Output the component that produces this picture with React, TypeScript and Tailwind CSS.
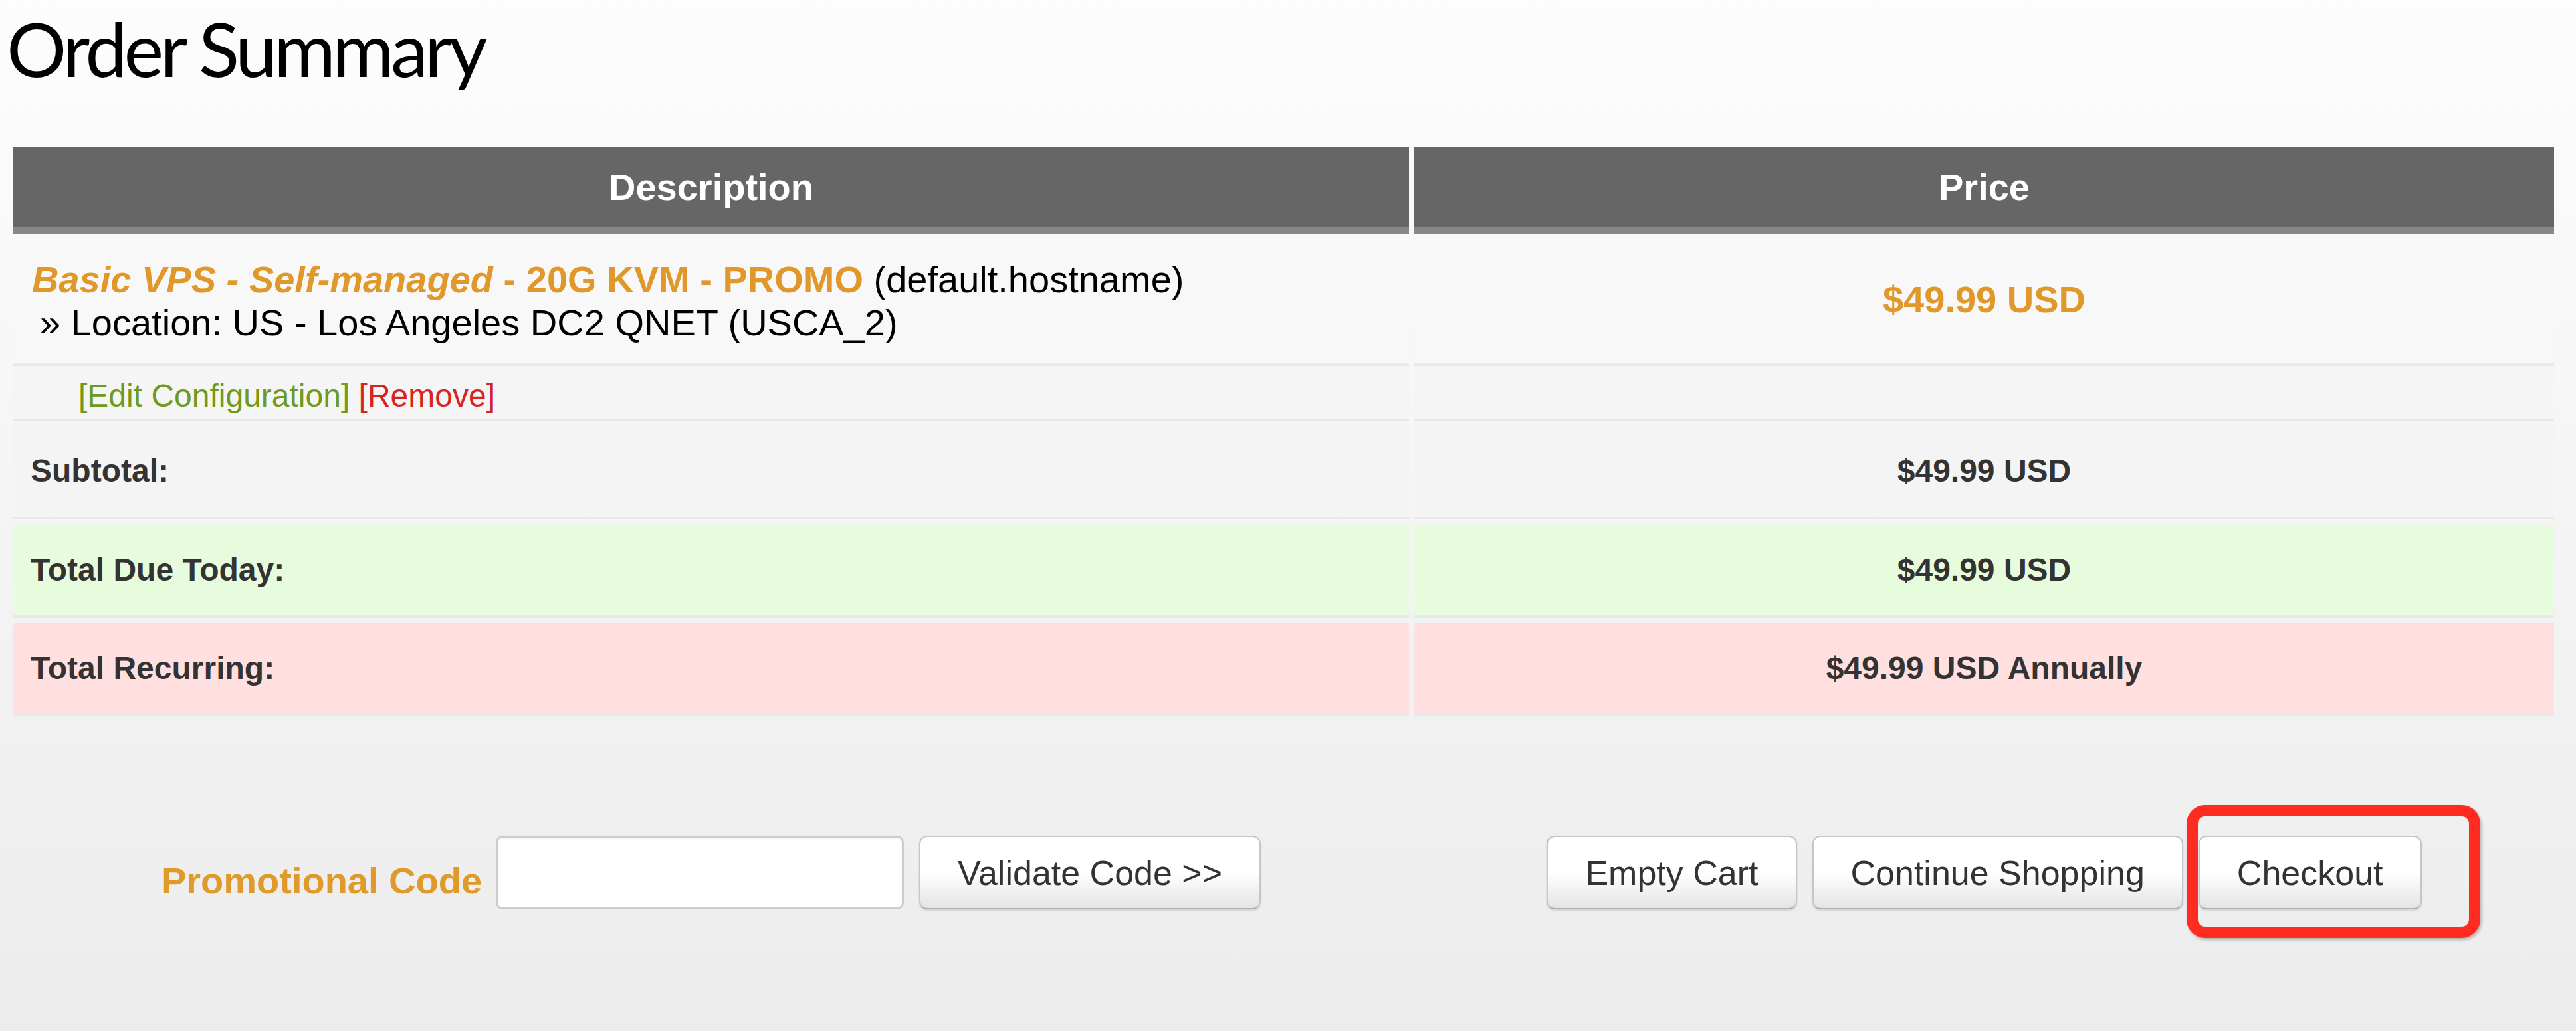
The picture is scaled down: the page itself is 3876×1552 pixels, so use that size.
import React from "react";

const BTN =
  "h-[111px] rounded-[12px] border-2 border-[#c6c6c6] border-b-[#b2b2b2] bg-linear-to-b from-white via-white to-[#e4e4e4] px-[56px] text-[52px] leading-none text-[#333333] shadow-[0_2px_3px_rgba(0,0,0,0.12)] whitespace-nowrap";

function CartButton({ label }: { label: string }) {
  return (
    <button type="button" className={BTN}>
      {label}
    </button>
  );
}

export default function App() {
  return (
    <div className="min-h-[1552px] w-full bg-linear-to-b from-[#fdfdfd] to-[#ececec] pl-[20px] pr-[33px] font-['Liberation_Sans',Arial,sans-serif]">
      <h1 className="h-[221px] -ml-[10px] pt-[16px] font-['Lato',sans-serif] text-[113px] font-normal leading-none tracking-[-5px] text-black">
        Order Summary
      </h1>

      {/* header */}
      <div className="grid grid-cols-[2100px_1fr] gap-x-[8px]">
        {["Description", "Price"].map((h) => (
          <div
            key={h}
            className="flex h-[132px] items-center justify-center border-t border-b-[11px] border-t-[#d9d9d9] border-b-[#888888] bg-[#666666] text-[56px] font-bold text-white"
          >
            {h}
          </div>
        ))}
      </div>

      {/* product */}
      <div className="mt-[2px] grid grid-cols-[2100px_1fr] gap-x-[8px]">
        <div className="h-[196px] border-b-4 border-[#e9e9e9] bg-[#f8f8f8] pl-[28px] pt-[33px] text-[56px] leading-[65px] text-black">
          <div>
            <span className="font-bold text-[#e0982a]">
              <i>Basic VPS - Self-managed</i> - 20G KVM - PROMO
            </span>{" "}
            (default.hostname)
          </div>
          <div className="pl-[12px]">» Location: US - Los Angeles DC2 QNET (USCA_2)</div>
        </div>
        <div className="flex h-[196px] items-center justify-center border-b-4 border-[#e9e9e9] bg-[#f8f8f8] text-[56px] font-bold text-[#e0982a]">
          $49.99 USD
        </div>
      </div>

      <div className="grid grid-cols-[2100px_1fr] gap-x-[8px]">
        <div className="h-[83px] border-b-4 border-[#e9e9e9] bg-[#f5f5f5] pl-[98px] pt-[21px] text-[48px] leading-none">
          <a className="text-[#6f9a20]">[Edit Configuration]</a>{" "}
          <a className="text-[#d42424]">[Remove]</a>
        </div>
        <div className="h-[83px] border-b-4 border-[#e9e9e9] bg-[#f5f5f5]" />
      </div>

      {/* totals */}
      <div className="grid grid-cols-[2100px_1fr] gap-x-[8px] text-[48px] font-bold text-[#333333]">
        <div className="flex h-[148px] items-center border-b-4 border-[#e9e9e9] bg-[#f4f4f4] pl-[26px] pt-[6px]">
          Subtotal:
        </div>
        <div className="flex h-[148px] items-center justify-center border-b-4 border-[#e9e9e9] bg-[#f4f4f4] pt-[6px]">
          $49.99 USD
        </div>
      </div>

      <div className="mt-[8px] grid grid-cols-[2100px_1fr] gap-x-[8px] text-[48px] font-bold text-[#333333]">
        <div className="flex h-[141px] items-center border-b-[5px] border-[#e8e8e8] bg-[#e6fcdc] pl-[26px]">
          Total Due Today:
        </div>
        <div className="flex h-[141px] items-center justify-center border-b-[5px] border-[#e8e8e8] bg-[#e6fcdc]">
          $49.99 USD
        </div>
      </div>

      <div className="mt-[7px] grid grid-cols-[2100px_1fr] gap-x-[8px] text-[48px] font-bold text-[#333333]">
        <div className="flex h-[140px] items-center border-b-4 border-[#e8e8e8] bg-[#ffdfe0] pl-[26px]">
          Total Recurring:
        </div>
        <div className="flex h-[140px] items-center justify-center border-b-4 border-[#e8e8e8] bg-[#ffdfe0]">
          $49.99 USD Annually
        </div>
      </div>

      {/* actions */}
      <div className="mt-[180px] grid grid-cols-[2100px_1fr] gap-x-[8px]">
        <div className="flex items-start justify-center">
          <span className="mr-[21px] mt-[40px] text-[56px] font-bold leading-none text-[#df9a2b]">
            Promotional Code
          </span>
          <input
            type="text"
            className="h-[111px] w-[614px] rounded-[10px] border-[3px] border-[#cccccc] bg-white shadow-[inset_0_2px_3px_rgba(0,0,0,0.06)] outline-none"
          />
          <span className="ml-[23px]">
            <CartButton label="Validate Code >>" />
          </span>
        </div>
        <div className="flex items-start justify-center gap-[23px]">
          <CartButton label="Empty Cart" />
          <CartButton label="Continue Shopping" />
          <span className="relative">
            <CartButton label="Checkout" />
            <span className="absolute -left-[18px] -top-[46px] h-[200px] w-[442px] rounded-[28px] border-[17px] border-[#fe2b20] shadow-[2px_3px_4px_rgba(0,0,0,0.25)]" />
          </span>
        </div>
      </div>
    </div>
  );
}
